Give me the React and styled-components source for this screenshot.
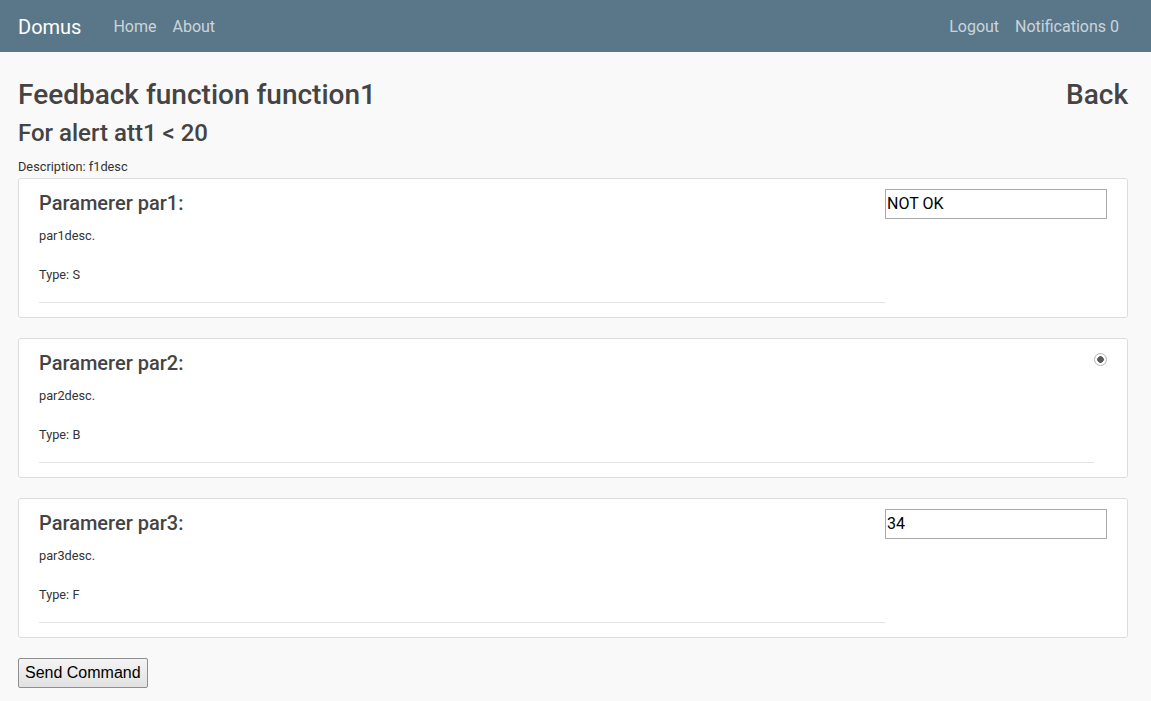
import React from "react";
import styled, { createGlobalStyle } from "styled-components";

const GlobalStyle = createGlobalStyle`
  body {
    margin: 0;
    background: #f9f9f9;
    font-family: Roboto, "Helvetica Neue", Arial, sans-serif;
    color: #444;
  }
`;

const params = [
  { name: "par1", desc: "par1desc.", type: "S", kind: "text", value: "NOT OK" },
  { name: "par2", desc: "par2desc.", type: "B", kind: "radio" },
  { name: "par3", desc: "par3desc.", type: "F", kind: "text", value: "34" },
];

const App = () => {
  return (
    <>
      <GlobalStyle />
      <Navbar>
        <Brand>Domus</Brand>
        <NavGroup>
          <NavLink>Home</NavLink>
          <NavLink>About</NavLink>
        </NavGroup>
        <NavGroup right>
          <NavLink>Logout</NavLink>
          <NavLink>Notifications 0</NavLink>
        </NavGroup>
      </Navbar>
      <Main>
        <TitleRow>
          <Title>Feedback function function1</Title>
          <Title as="a">Back</Title>
        </TitleRow>
        <Subtitle>For alert att1 &lt; 20</Subtitle>
        <Description>Description: f1desc</Description>
        <CardList>
          {params.map((p) => (
            <Card key={p.name}>
              <Info>
                <ParamTitle>Paramerer {p.name}:</ParamTitle>
                <Small>{p.desc}</Small>
                <Small spaced>Type: {p.type}</Small>
                <Rule />
              </Info>
              {p.kind === "text" ? (
                <TextInput type="text" defaultValue={p.value} />
              ) : (
                <Radio type="radio" defaultChecked disabled />
              )}
            </Card>
          ))}
        </CardList>
        <SendButton>Send Command</SendButton>
      </Main>
    </>
  );
};

export default App;

const Navbar = styled.nav`
  display: flex;
  align-items: center;
  height: 52px;
  padding: 0 24px 0 18px;
  background: #5a7789;
`;

const Brand = styled.span`
  font-size: 20px;
  color: #fff;
  margin-right: 24px;
  margin-top: 1px;
`;

const NavGroup = styled.div`
  display: flex;
  margin-left: ${({ right }) => (right ? "auto" : "0")};
`;

const NavLink = styled.a`
  font-size: 16px;
  color: rgba(255, 255, 255, 0.7);
  padding: 0 8px;
  cursor: pointer;
`;

const Main = styled.main`
  padding: 26px 23px 0 18px;
`;

const TitleRow = styled.div`
  display: flex;
  justify-content: space-between;
  align-items: baseline;
`;

const Title = styled.h1`
  margin: 0;
  font-size: 28px;
  font-weight: 500;
  line-height: 1.2;
  color: #444;
  cursor: pointer;
`;

const Subtitle = styled.h2`
  margin: 8px 0 0;
  font-size: 24px;
  font-weight: 500;
  line-height: 27px;
  color: #444;
`;

const Description = styled.p`
  margin: 11px 0 2px;
  font-size: 12.75px;
  line-height: 18px;
  color: #333;
`;

const CardList = styled.div`
  display: flex;
  flex-direction: column;
  gap: 20px;
`;

const Card = styled.div`
  display: flex;
  align-items: flex-start;
  background: #fff;
  border: 1px solid #ddd;
  border-radius: 3px;
  padding: 10px 20px 14px;
`;

const Info = styled.div`
  flex: 1;
`;

const ParamTitle = styled.h3`
  margin: 2px 0 0;
  font-size: 20px;
  font-weight: 500;
  line-height: 24px;
  color: #444;
`;

const Small = styled.p`
  margin: ${({ spaced }) => (spaced ? "21px" : "12px")} 0 0;
  font-size: 12.75px;
  line-height: 18px;
  color: #333;
`;

const Rule = styled.hr`
  margin: 18px 0 0;
  border: 0;
  border-top: 1px solid #e3e3e3;
`;

const TextInput = styled.input`
  box-sizing: border-box;
  width: 222px;
  height: 30px;
  padding: 1px 1px;
  border: 1px solid #a9a9a9;
  font-family: Roboto, Arial, sans-serif;
  font-size: 16px;
  color: #000;
  background: #fff;
`;

const Radio = styled.input`
  appearance: none;
  box-sizing: border-box;
  width: 13px;
  height: 13px;
  margin: 4px 0 0;
  border: 1px solid #b5b5b5;
  border-radius: 50%;
  background: radial-gradient(circle, #5a5a5a 0 3px, #fff 3.6px);
`;

const SendButton = styled.button`
  margin-top: 20px;
  height: 30px;
  padding: 0 6px;
  font-family: "Liberation Sans", Arial, sans-serif;
  font-size: 16px;
  color: #000;
  background: linear-gradient(#f4f4f4, #e2e2e2);
  border: 1px solid #8f8f8f;
  border-radius: 2px;
`;
